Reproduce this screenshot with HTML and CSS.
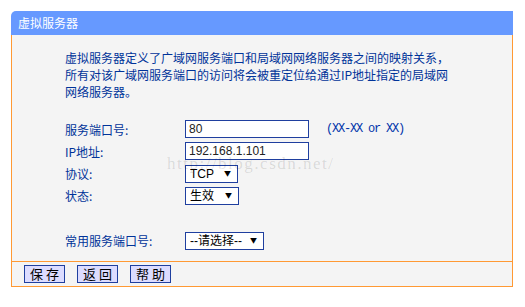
FILE: index.html
```html
<!DOCTYPE html>
<html lang="zh-CN">
<head>
    <meta charset="UTF-8">
    <title>虚拟服务器</title>
    <link rel="stylesheet" href="styles.css">
</head>
<body>
    <div class="panel">
        <div class="panel-head">虚拟服务器</div>
        <div class="panel-body">
            <p class="intro">虚拟服务器定义了广域网服务端口和局域网网络服务器之间的映射关系，<br>所有对该广域网服务端口的访问将会被重定位给通过IP地址指定的局域网<br>网络服务器。</p>
            <form class="vs-form">
                <div class="row">
                    <label>服务端口号:</label>
                    <input type="text" class="txt" value="80">
                    <span class="hint">(XX-XX or XX)</span>
                </div>
                <div class="row">
                    <label>IP地址:</label>
                    <input type="text" class="txt" value="192.168.1.101">
                </div>
                <div class="row">
                    <label>协议:</label>
                    <span class="sel-wrap">
                        <select class="sel sel-proto">
                            <option>TCP</option>
                            <option>UDP</option>
                            <option>ALL</option>
                        </select>
                    </span>
                </div>
                <div class="row">
                    <label>状态:</label>
                    <span class="sel-wrap">
                        <select class="sel sel-state">
                            <option>生效</option>
                            <option>失效</option>
                        </select>
                    </span>
                </div>
                <div class="row row-common">
                    <label>常用服务端口号:</label>
                    <span class="sel-wrap">
                        <select class="sel sel-common">
                            <option>--请选择--</option>
                            <option>DNS</option>
                            <option>FTP</option>
                            <option>HTTP</option>
                        </select>
                    </span>
                </div>
            </form>
        </div>
        <div class="panel-foot">
            <button type="button" class="btn">保 存</button>
            <button type="button" class="btn">返 回</button>
            <button type="button" class="btn">帮 助</button>
        </div>
    </div>
    <div class="watermark">http://blog.csdn.net/</div>
</body>
</html>
```

FILE: styles.css
```css
body {
    margin: 0;
    background: #fff;
    font-family: "Noto Sans CJK SC", "Liberation Sans", sans-serif;
    font-size: 12px;
    color: #003399;
}
.panel {
    width: 502px;
    margin: 11px 0 0 11px;
}
.panel-head {
    height: 24px;
    line-height: 24px;
    padding-left: 7px;
    background: #6699ff;
    color: #fff;
    border-top-left-radius: 5px;
}
.panel-body {
    box-sizing: border-box;
    height: 226px;
    padding: 14px 0 0 53px;
    background: #f4f4f4;
    border-left: 1px solid #ff9933;
    border-right: 1px solid #ff9933;
}
.intro {
    margin: 0;
    line-height: 17px;
}
.vs-form {
    margin-top: 20px;
}
.row {
    display: flex;
    align-items: center;
    height: 18px;
    margin-bottom: 4px;
}
.row label {
    width: 120px;
    flex-shrink: 0;
}
.row-common {
    margin-top: 27px;
}
.txt {
    box-sizing: border-box;
    width: 124px;
    height: 18px;
    margin: 0;
    padding: 0 3px;
    border: 1px solid #1f3f9f;
    background: #fff;
    font-family: "Liberation Sans", sans-serif;
    font-size: 12px;
    color: #222;
}
.hint {
    margin-left: 17px;
    font-family: "Liberation Mono", monospace;
    font-size: 12px;
    letter-spacing: -1.2px;
    color: #0033aa;
}
.sel-wrap {
    position: relative;
    display: inline-block;
    height: 18px;
}
.sel-wrap::after {
    content: "\25BC";
    position: absolute;
    right: 7px;
    top: 4px;
    font-size: 7px;
    line-height: 10px;
    color: #000;
    pointer-events: none;
}
.sel {
    box-sizing: border-box;
    height: 18px;
    margin: 0;
    padding: 0 0 0 4px;
    border: 1px solid #1f3f9f;
    border-radius: 0;
    background: #fff;
    -webkit-appearance: none;
    appearance: none;
    font-family: "Liberation Sans", "Noto Sans CJK SC", sans-serif;
    font-size: 12px;
    line-height: 16px;
    color: #000;
}
.sel-proto { width: 53px; }
.sel-state { width: 54px; }
.sel-common { width: 79px; }
.panel-foot {
    box-sizing: border-box;
    display: flex;
    gap: 12px;
    height: 26px;
    padding: 3px 12px 0;
    background: #f4f4f4;
    border: 1px solid #ff9933;
}
.btn {
    box-sizing: border-box;
    width: 41px;
    height: 18px;
    padding: 0;
    border: 1px solid #1f3f9f;
    background: #dcdcff;
    font-family: "Noto Sans CJK SC", sans-serif;
    font-size: 13px;
    line-height: 16px;
    color: #000;
}
.watermark {
    position: absolute;
    left: 167px;
    top: 156px;
    font-family: "Liberation Serif", serif;
    font-size: 17px;
    line-height: 16px;
    letter-spacing: 1.5px;
    color: rgba(0, 0, 0, 0.12);
    pointer-events: none;
}
```
